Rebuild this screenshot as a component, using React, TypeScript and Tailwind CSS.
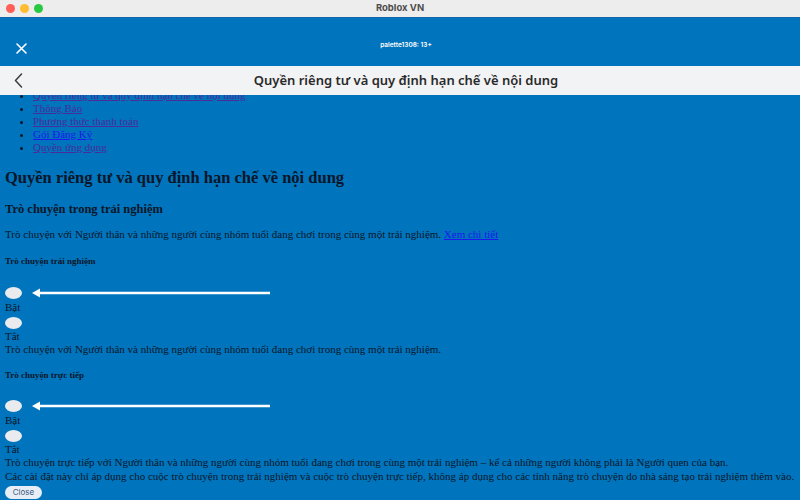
import React from "react";

const serif = { fontFamily: '"Liberation Serif", "Times New Roman", serif' };

function Arrow() {
  return (
    <svg className="absolute left-[25px] top-[0px]" width="244" height="12" viewBox="0 0 244 12">
      <line x1="6" y1="6" x2="240" y2="6" stroke="#ffffff" strokeWidth="2.4" />
      <polygon points="2,6 10,1.5 10,10.5" fill="#ffffff" />
    </svg>
  );
}

function ToggleGroup({ arrow }: { arrow?: boolean }) {
  return (
    <div>
      <div className="relative h-[14px] pt-[1px]">
        <div className="relative h-[12px] w-[17px] rounded-[50%] bg-[#e9ebee]">{arrow && <Arrow />}</div>
      </div>
      <div className="h-[14px] leading-[14px]">Bật</div>
      <div className="mt-[2px] h-[14px] pt-[1px]">
        <div className="h-[12px] w-[17px] rounded-[50%] bg-[#e9ebee]" />
      </div>
      <div className="h-[13px] leading-[13px]">Tắt</div>
    </div>
  );
}

export default function App() {
  return (
    <div className="flex h-[500px] w-[800px] flex-col overflow-hidden bg-[#0074bd]">
      {/* macOS title bar */}
      <div className="relative flex h-[18px] shrink-0 items-center justify-center border-b border-[#1565a8] bg-[#ededed]">
        <div className="absolute left-[6px] top-[4px] flex gap-[5px]">
          <span className="h-[9px] w-[9px] rounded-full bg-[#fe5f57]" />
          <span className="h-[9px] w-[9px] rounded-full bg-[#febc2e]" />
          <span className="h-[9px] w-[9px] rounded-full bg-[#28c840]" />
        </div>
        <span className="text-[9.5px] font-bold text-[#4d4d4d]" style={{ fontFamily: "Inter, sans-serif" }}>
          Roblox VN
        </span>
      </div>

      {/* blue top bar */}
      <div className="relative flex h-[48px] shrink-0 items-end bg-[#0074bd] pb-[12px]">
        <svg className="ml-[16px]" width="11" height="11" viewBox="0 0 11 11">
          <path d="M1 1 L10 10 M10 1 L1 10" stroke="#ffffff" strokeWidth="1.6" strokeLinecap="round" />
        </svg>
        <div className="absolute bottom-[15px] left-0 right-0 flex justify-center pl-[12px]">
          <span className="text-[6.5px] font-semibold text-white" style={{ fontFamily: "Inter, sans-serif" }}>
            palette1308: 13+
          </span>
        </div>
      </div>

      {/* light header */}
      <div className="relative flex h-[29px] shrink-0 items-center bg-[#f2f3f5]">
        <svg className="ml-[14px]" width="9" height="15" viewBox="0 0 9 15">
          <path d="M7.5 1 L1.5 7.5 L7.5 14" stroke="#3c3c3c" strokeWidth="1.5" fill="none" strokeLinecap="round" strokeLinejoin="round" />
        </svg>
        <div className="absolute inset-0 flex items-center justify-center pl-[12px] pt-[1px]">
          <span className="text-[13px] font-semibold text-[#2a2a2a]" style={{ fontFamily: '"Noto Sans", Inter, sans-serif' }}>
            Quyền riêng tư và quy định hạn chế về nội dung
          </span>
        </div>
      </div>

      {/* content */}
      <div className="flex-1 overflow-hidden pl-[5px] text-[11px] text-[#0b1628]" style={serif}>
        <ul className="mt-[-6px] list-disc pl-[28px] leading-[13px]">
          <li><span className="text-[#4a2b9a] underline">Quyền riêng tư và quy định hạn chế về nội dung</span></li>
          <li><span className="text-[#4a2b9a] underline">Thông Báo</span></li>
          <li><span className="text-[#4a2b9a] underline">Phương thức thanh toán</span></li>
          <li><span className="text-[#1a1aee] underline">Gói Đăng Ký</span></li>
          <li><span className="text-[#4a2b9a] underline">Quyền ứng dụng</span></li>
        </ul>
        <h1 className="mt-[13px] text-[16.5px] font-bold leading-[22px]">Quyền riêng tư và quy định hạn chế về nội dung</h1>
        <h2 className="mt-[12px] text-[12.5px] font-bold leading-[16px]">Trò chuyện trong trải nghiệm</h2>
        <p className="mt-[11px] leading-[13px]">
          Trò chuyện với Người thân và những người cùng nhóm tuổi đang chơi trong cùng một trải nghiệm.{" "}
          <span className="text-[#1a1aee] underline">Xem chi tiết</span>
        </p>
        <h5 className="mt-[15px] text-[9px] font-bold leading-[11px]">Trò chuyện trải nghiệm</h5>
        <div className="mt-[19px]">
          <ToggleGroup arrow />
        </div>
        <p className="leading-[13px]">Trò chuyện với Người thân và những người cùng nhóm tuổi đang chơi trong cùng một trải nghiệm.</p>
        <h5 className="mt-[14px] text-[9px] font-bold leading-[11px]">Trò chuyện trực tiếp</h5>
        <div className="mt-[18px]">
          <ToggleGroup arrow />
        </div>
        <p className="leading-[13.5px]">
          Trò chuyện trực tiếp với Người thân và những người cùng nhóm tuổi đang chơi trong cùng một trải nghiệm – kể cả những người không phải là Người quen của bạn.
        </p>
        <p className="leading-[13.5px]">
          Các cài đặt này chỉ áp dụng cho cuộc trò chuyện trong trải nghiệm và cuộc trò chuyện trực tiếp, không áp dụng cho các tính năng trò chuyện do nhà sáng tạo trải nghiệm thêm vào.
        </p>
        <button
          className="mt-[0px] h-[13px] w-[37px] rounded-full bg-[#e8eef6] text-[8px] leading-[13px] text-[#3a5a80]"
          style={{ fontFamily: "Inter, sans-serif" }}
        >
          Close
        </button>
      </div>
    </div>
  );
}
